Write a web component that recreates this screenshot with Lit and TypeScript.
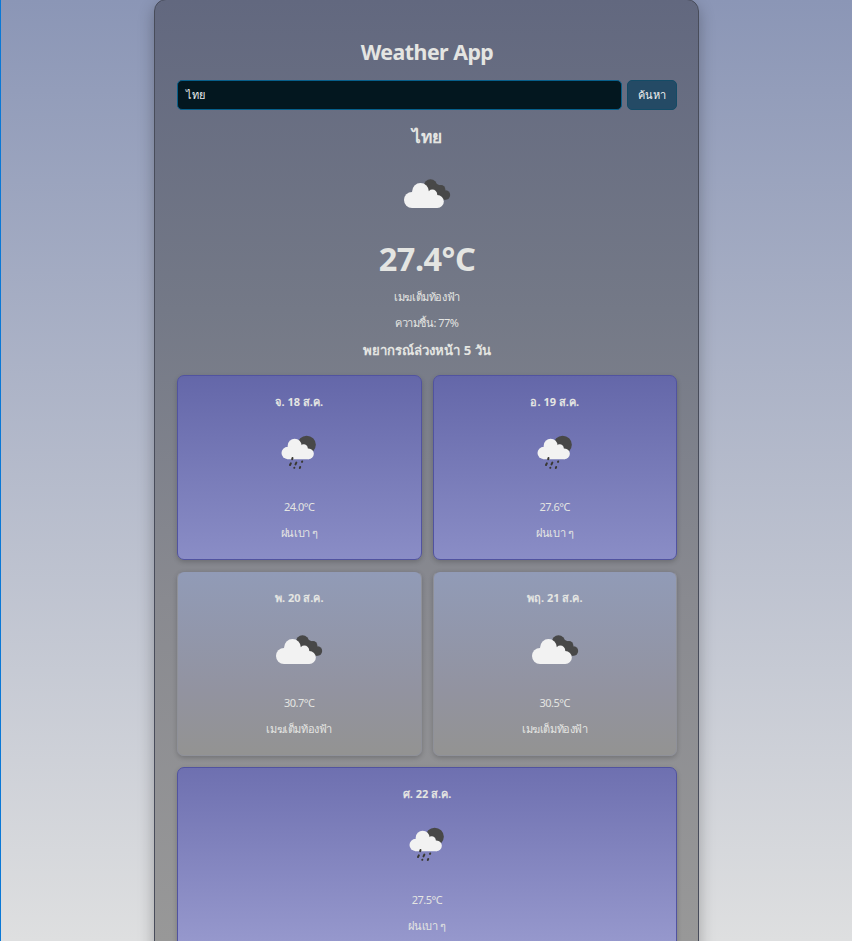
import { LitElement, html, css, svg } from "lit";
import { customElement, property } from "lit/decorators.js";
import { classMap } from "lit/directives/class-map.js";

type Sky = "clouds" | "rain";

interface Day {
  date: string;
  sky: Sky;
  temp: string;
  text: string;
}

const DAYS: Day[] = [
  { date: "จ. 18 ส.ค.", sky: "rain", temp: "24.0°C", text: "ฝนเบา ๆ" },
  { date: "อ. 19 ส.ค.", sky: "rain", temp: "27.6°C", text: "ฝนเบา ๆ" },
  { date: "พ. 20 ส.ค.", sky: "clouds", temp: "30.7°C", text: "เมฆเต็มท้องฟ้า" },
  { date: "พฤ. 21 ส.ค.", sky: "clouds", temp: "30.5°C", text: "เมฆเต็มท้องฟ้า" },
  { date: "ศ. 22 ส.ค.", sky: "rain", temp: "27.5°C", text: "ฝนเบา ๆ" },
];

@customElement("weather-icon")
class WeatherIcon extends LitElement {
  @property() sky: Sky = "clouds";

  static styles = css`
    :host { display: block; width: 72px; height: 72px; }
    svg { display: block; width: 72px; height: 72px; }
    .dark { fill: #484848; }
    .light { fill: #f2f2f2; }
    .drop { stroke: #393832; stroke-width: 6; stroke-linecap: round; }
  `;

  render() {
    const clouds = svg`
      <g class="dark">
        <circle cx="118.5" cy="84" r="20"/>
        <circle cx="150" cy="94" r="13"/>
        <circle cx="163" cy="111" r="14.5"/>
        <path d="M105 90L126 72L158 88L163 125.5L130 120Z"/>
      </g>
      <g class="light">
        <circle cx="63" cy="126" r="24"/>
        <circle cx="88.5" cy="100" r="25"/>
        <circle cx="124" cy="109" r="14.5"/>
        <circle cx="139" cy="130.5" r="19.5"/>
        <path d="M63 103L127 100L139 150L63 150Z"/>
      </g>`;
    const rain = svg`
      <circle class="dark" cx="131" cy="80.5" r="27.5"/>
      <g class="light">
        <circle cx="74" cy="105" r="18.5"/>
        <circle cx="95" cy="83" r="21"/>
        <circle cx="122" cy="91" r="12.5"/>
        <circle cx="136.5" cy="107.5" r="16"/>
        <path d="M74 87L124 83L137 123.5L74 123.5Z"/>
      </g>
      <path class="drop" d="M88.5 120L87.5 124M83.5 136L81 141M100 134L97.5 139M117.5 130.5L117 131.5M94 149L93.8 149.5M111.5 147L110.5 150"/>`;
    return html`<svg viewBox="0 0 216 216">${this.sky === "rain" ? rain : clouds}</svg>`;
  }
}

@customElement("app-root")
class AppRoot extends LitElement {
  static styles = css`
    * { box-sizing: border-box; }
    :host {
      display: flex;
      justify-content: center;
      height: 941px;
      overflow: hidden;
      border-left: 1px solid #0a78d6;
      background: linear-gradient(#8b96b6, #dedfe0);
      color: #e4e5e2;
      font: 11px/16px "Noto Sans", "Open Sans", sans-serif;
      text-align: center;
      box-sizing: border-box;
    }
    .panel {
      width: 545px;
      height: 1000px;
      flex: none;
      margin-top: -1px;
      padding: 35px 21px 0 22px;
      border: 1px solid #484c5a;
      border-radius: 12px;
      background: linear-gradient(#62687f 0, #747987 310px, #898a90 600px, #989898 941px);
      box-shadow: 0 6px 16px rgba(0, 0, 0, 0.28);
    }
    h1, h2, h3, p { margin: 0; }
    h1 { font-size: 21.3px; line-height: 33px; height: 45px; letter-spacing: -0.5px; }
    .search { display: grid; grid-template-columns: 1fr 50px; gap: 5px; height: 30px; }
    .field, .button { border-radius: 5px; line-height: 28px; }
    .field {
      padding-left: 8px;
      border: 1px solid #075f8a;
      background: #03171f;
      text-align: left;
      color: #e8ecec;
    }
    .button { background: #244a65; border: 1px solid #134b66; color: #f0f0f0; }
    h2 { margin-top: 15px; font-size: 17.3px; line-height: 24px; }
    .now { margin: 9px auto 0; }
    .temp { margin-top: 9px; font-size: 32.5px; line-height: 40px; font-weight: 700; letter-spacing: -0.5px; }
    .cond { margin-top: 10px; letter-spacing: -0.4px; }
    .hum { margin-top: 10px; letter-spacing: -0.5px; }
    h3 { margin-top: 10px; font-size: 13.2px; line-height: 18px; }
    .days { margin-top: 15.6px; display: grid; grid-template-columns: 1fr 1fr; gap: 11.4px 11px; grid-auto-rows: 185px; }
    .card {
      display: flex;
      flex-direction: column;
      align-items: center;
      padding-top: 18px;
      border: 1px solid #8f9199;
      border-top-color: #7f8088;
      border-radius: 7px;
      background: linear-gradient(#919bb7, #9293a0 65%, #939392);
      box-shadow: 0 2px 5px rgba(0, 0, 0, 0.2);
    }
    .card.rain { border-color: #5153a0; background: linear-gradient(#6467a9, #8a8dc6); }
    .card.wide { grid-column: span 2; background: linear-gradient(#6e70b0, #989ace); }
    .date { font-weight: 700; }
    .card weather-icon { margin-top: 8px; }
    .deg { margin-top: 9.4px; letter-spacing: -0.5px; }
    .text { margin-top: 10px; letter-spacing: -0.4px; }
  `;

  private card(day: Day, index: number) {
    const classes = { card: true, rain: day.sky === "rain", wide: index === 4 };
    return html`<article class=${classMap(classes)}>
      <p class="date">${day.date}</p>
      <weather-icon .sky=${day.sky}></weather-icon>
      <p class="deg">${day.temp}</p>
      <p class="text">${day.text}</p>
    </article>`;
  }

  render() {
    return html`<main class="panel">
      <h1>Weather App</h1>
      <div class="search">
        <div class="field">ไทย</div>
        <div class="button" role="button">ค้นหา</div>
      </div>
      <h2>ไทย</h2>
      <weather-icon class="now" sky="clouds"></weather-icon>
      <p class="temp">27.4°C</p>
      <p class="cond">เมฆเต็มท้องฟ้า</p>
      <p class="hum">ความชื้น: 77%</p>
      <h3>พยากรณ์ล่วงหน้า 5 วัน</h3>
      <section class="days">${DAYS.map((d, i) => this.card(d, i))}</section>
    </main>`;
  }
}
